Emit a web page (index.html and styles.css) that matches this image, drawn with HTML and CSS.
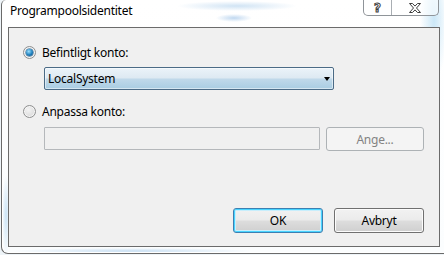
FILE: index.html
```html
<!DOCTYPE html>
<html>
<head>
<meta charset="utf-8">
<link rel="stylesheet" href="styles.css">
</head>
<body>
<div class="window">
  <div class="titlebar">
    <span class="title">Programpoolsidentitet</span>
    <div class="caption">
      <span class="cbtn help">?</span>
      <span class="cbtn close">
        <svg width="14" height="10" viewBox="0 0 14 10"><path d="M1.5 0.5h3l2.5 2.6 2.5-2.6h3l-4 4.5 4 4.5h-3l-2.5-2.6-2.5 2.6h-3l4-4.5z" fill="#fff" stroke="#3d3d3d" stroke-width="1" stroke-linejoin="round"/></svg>
      </span>
    </div>
  </div>
  <div class="client">
    <div class="opt">
      <span class="radio checked"></span>
      <span class="label">Befintligt konto:</span>
    </div>
    <div class="combo">
      <span class="combo-text">LocalSystem</span>
      <span class="arrow"></span>
    </div>
    <div class="opt opt2">
      <span class="radio"></span>
      <span class="label">Anpassa konto:</span>
    </div>
    <div class="custom-row">
      <div class="textbox"></div>
      <div class="btn disabled">Ange...</div>
    </div>
    <div class="buttons">
      <div class="btn default">OK</div>
      <div class="btn">Avbryt</div>
    </div>
  </div>
</div>
</body>
</html>
```
FILE: styles.css
```css
html, body {
  margin: 0;
  height: 100%;
  overflow: hidden;
}
body {
  padding-left: 1px;
  box-sizing: border-box;
  background: #eef4f8;
  font-family: "Segoe UI", "Noto Sans", sans-serif;
  font-size: 12px;
  letter-spacing: -0.25px;
  color: #000;
}
.window {
  height: 254px;
  box-sizing: border-box;
  display: flex;
  flex-direction: column;
  padding: 0 4px 6px 6px;
  border-left: 1px solid #6a6a6a;
  border-bottom: 1px solid #6a6a6a;
  border-bottom-left-radius: 7px;
  border-top-left-radius: 5px;
  box-shadow: inset 1px 0 0 #fff, inset 0 -1px 0 #fff;
  background:
    radial-gradient(ellipse 60px 5px at 235px 6px, rgba(170,205,235,.55), transparent),
    radial-gradient(ellipse 18px 4px at 232px 18px, rgba(150,190,230,.6), transparent),
    radial-gradient(ellipse 120px 3px at 130px 251px, rgba(160,200,235,.55), transparent),
    radial-gradient(ellipse 4px 40px at 4px 215px, rgba(170,210,240,.6), transparent),
    radial-gradient(ellipse 14px 60px at 432px 20px, rgba(190,225,245,.8), transparent),
    linear-gradient(#ffffff, #fbfdfe);
}
.titlebar {
  height: 27px;
  display: flex;
  align-items: flex-start;
  flex: none;
}
.title {
  padding: 3px 0 0 2px;
  line-height: 16px;
}
.caption {
  margin-left: auto;
  margin-right: 1px;
  display: flex;
  height: 16px;
  box-sizing: border-box;
  border: 1px solid #8f9499;
  border-top: 0;
  border-radius: 0 0 5px 5px;
  background: rgba(255,255,255,.55);
}
.cbtn {
  display: flex;
  align-items: center;
  justify-content: center;
}
.help {
  width: 27px;
  border-right: 1px solid #a9aeb3;
  font-family: "DejaVu Sans", sans-serif;
  font-weight: bold;
  font-size: 12px;
  line-height: 14px;
  letter-spacing: 0;
  color: #fff;
  -webkit-text-stroke: 1px #3d3d3d;
}
.close {
  width: 46px;
}
.client {
  flex: 1;
  display: flex;
  flex-direction: column;
  border: 1px solid #6b6b6b;
  background: #f0f0f0;
  padding: 18px 15px 13px 14px;
}
.opt {
  display: flex;
  align-items: center;
  height: 13px;
  gap: 6px;
}
.opt2 {
  margin-top: 15px;
}
.label {
  line-height: 13px;
}
.radio {
  width: 13px;
  height: 13px;
  box-sizing: border-box;
  border-radius: 50%;
  border: 1px solid #8e8f8f;
  background: radial-gradient(circle at 40% 35%, #f4f4f4, #dcdcdc 70%);
  box-shadow: inset 0 0 0 1px #f6f6f6;
  display: flex;
  align-items: center;
  justify-content: center;
}
.radio.checked::after {
  content: "";
  width: 7px;
  height: 7px;
  border-radius: 50%;
  background: radial-gradient(circle at 40% 35%, #9be0ff, #1f80bd 55%, #0b4a7c);
  box-shadow: 0 0 0 0.5px #1c5d8e;
}
.combo {
  margin: 8px 0 0 21px;
  width: 290px;
  height: 23px;
  box-sizing: border-box;
  border: 1px solid #4b6b86;
  border-radius: 2px;
  background: linear-gradient(#ebf3f9, #dde9f2 48%, #c0d9ea 52%, #a9cde2);
  box-shadow: inset 0 0 0 1px rgba(255,255,255,.5);
  display: flex;
  align-items: center;
  padding: 0 3px 0 3px;
}
.combo-text {
  flex: 1;
}
.arrow {
  width: 0;
  height: 0;
  border-left: 3.5px solid transparent;
  border-right: 3.5px solid transparent;
  border-top: 4px solid #000;
  margin-right: 0;
}
.custom-row {
  margin: 9px 0 0 21px;
  display: flex;
  align-items: flex-start;
  gap: 6px;
}
.textbox {
  width: 276px;
  height: 23px;
  box-sizing: border-box;
  border: 1px solid #b5b8bb;
  border-radius: 1px;
  background: #f0f0f0;
}
.btn {
  width: 98px;
  height: 24px;
  box-sizing: border-box;
  border: 1px solid #707070;
  border-radius: 3px;
  background: linear-gradient(#f2f2f2, #ebebeb 48%, #dddddd 52%, #cfcfcf);
  box-shadow: inset 0 0 0 1px #fcfcfc;
  display: flex;
  align-items: center;
  justify-content: center;
}
.btn.disabled {
  border-color: #adb2b5;
  background: #f4f4f4;
  box-shadow: none;
  color: #838383;
}
.buttons {
  margin-top: auto;
  display: flex;
  justify-content: flex-end;
  gap: 11px;
}
.buttons .btn {
  width: 90px;
  height: 25px;
}
.btn.default {
  border-color: #3c7fb1;
  box-shadow: inset 0 0 0 1px #48d4ff, inset 0 0 0 2px #c8eefc;
}
```
